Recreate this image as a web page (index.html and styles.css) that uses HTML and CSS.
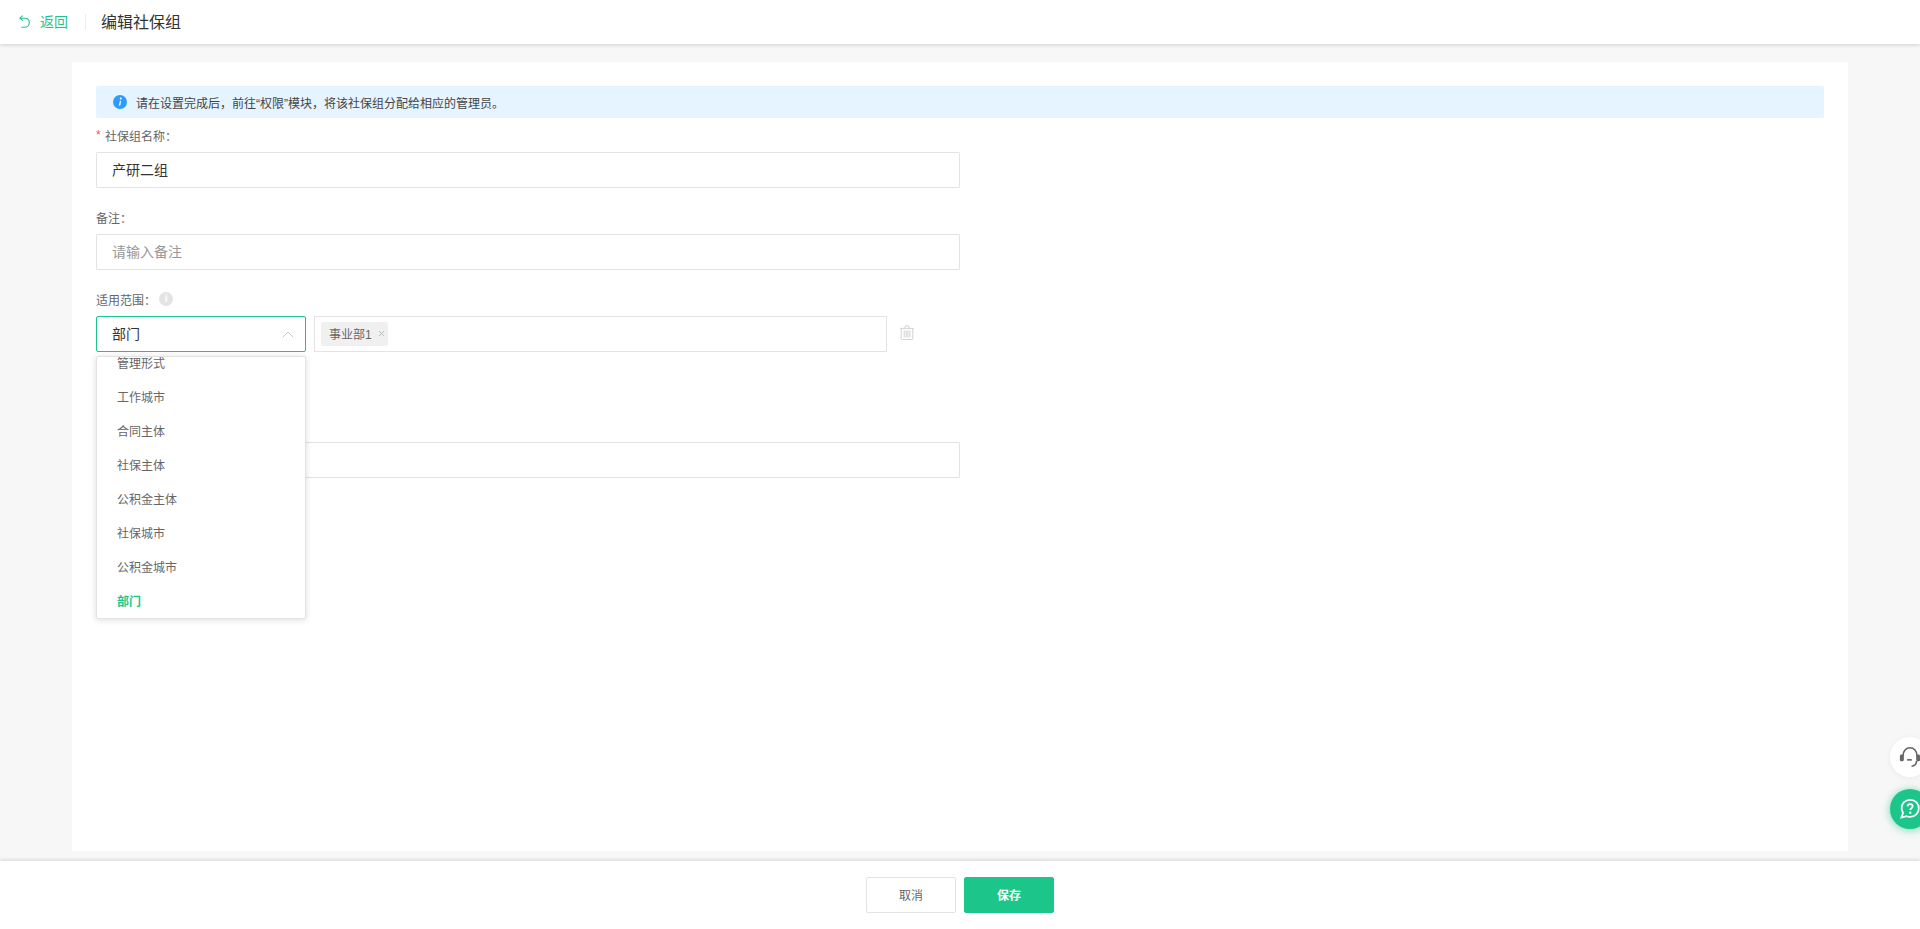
FILE: index.html
```html
<!DOCTYPE html>
<html lang="zh-CN">
<head>
<meta charset="utf-8">
<title>编辑社保组</title>
<link rel="stylesheet" href="styles.css">
</head>
<body>
<div class="app">
  <header class="topbar">
    <a class="back">
      <svg class="back-icon" viewBox="0 0 11 13" fill="none" stroke="currentColor" stroke-width="1.1"><path d="M3.6 0.6 L0.9 3.2 L3.8 5.6"/><path d="M1.2 3.2 H6 C8.6 3.2 10.3 5 10.3 7.4 C10.3 10 8.4 12.2 5.8 12.2 H2.4"/></svg>
      <span>返回</span>
    </a>
    <span class="divider"></span>
    <h1 class="title">编辑社保组</h1>
  </header>
  <main class="content">
    <section class="card">
      <div class="alert">
        <svg class="alert-icon" viewBox="0 0 14 14"><circle cx="7" cy="7" r="7" fill="#2f9bff"/><circle cx="7.8" cy="3.6" r="1" fill="#fff"/><path d="M6.9 5.7 H8.1 L7.3 10.6 H5.9 Z" fill="#fff"/></svg>
        <span>请在设置完成后，前往“权限”模块，将该社保组分配给相应的管理员。</span>
      </div>
      <div class="field">
        <label class="label"><i class="req">*</i>社保组名称：</label>
        <div class="input value">产研二组</div>
      </div>
      <div class="field">
        <label class="label">备注：</label>
        <div class="input placeholder">请输入备注</div>
      </div>
      <div class="field scope">
        <label class="label">适用范围：<span class="info">i</span></label>
        <div class="scope-row">
          <div class="select-wrap">
            <div class="select">
              <span>部门</span>
              <svg class="chevron" viewBox="0 0 12 7" fill="none" stroke="#c4c7cc" stroke-width="1"><path d="M0.7 6.3 L6 1 L11.3 6.3"/></svg>
            </div>
            <ul class="menu">
              <li>管理形式</li>
              <li>工作城市</li>
              <li>合同主体</li>
              <li>社保主体</li>
              <li>公积金主体</li>
              <li>社保城市</li>
              <li>公积金城市</li>
              <li class="active">部门</li>
            </ul>
          </div>
          <div class="tags">
            <span class="tag">事业部1<svg class="tag-x" viewBox="0 0 8 8" fill="none" stroke="#b5b5b5" stroke-width="1"><path d="M1 1 L7 7 M7 1 L1 7"/></svg></span>
          </div>
          <svg class="trash" viewBox="0 0 14 15" fill="none" stroke="#c8c8c8" stroke-width="0.8"><path d="M0.2 3.4 H13.8"/><path d="M4.6 3.2 L5.6 0.9 H8.4 L9.4 3.2"/><path d="M1.2 3.4 V13.6 Q1.2 14.5 2.2 14.5 H11.8 Q12.8 14.5 12.8 13.6 V3.4"/><path d="M4.2 5.4 V12.4 M6.2 5.4 V12.4 M7.9 5.4 V12.4 M9.8 5.4 V12.4"/></svg>
        </div>
      </div>
      <div class="field last">
        <div class="input"></div>
      </div>
    </section>
  </main>
  <footer class="footer">
    <button class="btn cancel">取消</button>
    <button class="btn save">保存</button>
  </footer>
  <div class="float-btn service">
    <svg viewBox="0 0 20 20" fill="none" stroke="#666" stroke-width="1.5"><path d="M3.7 9.4 V8.6 C3.7 4.6 6.4 1.6 10 1.6 C13.6 1.6 16.3 4.6 16.3 8.6 V9.4"/><rect x="0.8" y="7.8" width="3.6" height="6" rx="1.4" fill="#666" stroke="none"/><rect x="15.6" y="7.8" width="3.6" height="6" rx="1.4" fill="#666" stroke="none"/><path d="M16 13.6 C15.8 16.6 13.8 18.2 11.4 18.4"/><path d="M7.4 12.6 H11.6"/></svg>
  </div>
  <div class="float-btn help">
    <svg viewBox="0 0 20 20" fill="none" stroke="#fff" stroke-width="1.6"><path d="M10.2 1.6 C5.6 1.6 2.4 5 2.4 9.4 C2.4 11 2.9 12.4 3.7 13.6 L2.2 17.8 L7 16.6 C8 17 9 17.2 10.2 17.2 C14.6 17.2 18 13.8 18 9.4 C18 5 14.6 1.6 10.2 1.6 Z"/><path d="M7.8 7.6 C7.9 6.3 8.9 5.6 10.1 5.6 C11.4 5.6 12.4 6.4 12.4 7.6 C12.4 9.2 10.2 9.3 10.2 11" stroke-width="1.7"/><circle cx="10.2" cy="13.3" r="1.1" fill="#fff" stroke="none"/></svg>
  </div>
</div>
</body>
</html>
```
FILE: styles.css
```css
* { box-sizing: border-box; }
html, body { margin: 0; padding: 0; height: 100%; }
body {
  font-family: "Liberation Sans", "Noto Sans CJK SC", sans-serif;
  font-size: 12px;
  color: #666;
  background: #f7f7f7;
  overflow: hidden;
}
.app {
  position: relative;
  height: 929px;
  display: flex;
  flex-direction: column;
  overflow: hidden;
}
.topbar {
  height: 44px;
  flex: none;
  display: flex;
  align-items: center;
  padding-left: 19px;
  background: #fff;
  box-shadow: 0 1px 4px rgba(0, 0, 0, 0.16);
  position: relative;
}
.back {
  display: flex;
  align-items: center;
  color: #1cc68a;
  font-size: 14px;
}
.back span { padding-bottom: 2px; }
.back-icon { width: 11px; height: 13px; margin-right: 10px; margin-bottom: 1px; }
.divider {
  width: 1px;
  height: 16px;
  background: #eee;
  margin: 0 15px 0 17px;
}
.title {
  margin: 0;
  padding-bottom: 2px;
  font-size: 16px;
  font-weight: 400;
  color: #333;
}
.content {
  flex: 1;
  min-height: 0;
  padding: 18px 72px 10px;
  display: flex;
}
.card {
  flex: 1;
  background: #fff;
  padding: 24px 24px 0;
}
.alert {
  height: 32px;
  display: flex;
  align-items: center;
  padding-left: 17px;
  background: #e6f4ff;
  border-radius: 2px;
  color: #444;
}
.alert-icon { width: 14px; height: 14px; margin-right: 9px; flex: none; }
.field { width: 864px; }
.label {
  display: flex;
  align-items: center;
  height: 14px;
  margin-top: 10px;
  margin-bottom: 10px;
  color: #666;
}
.req {
  color: #f5535b;
  font-style: normal;
  width: 9px;
}
.input {
  height: 36px;
  border: 1px solid #e3e3e3;
  border-radius: 1px;
  padding: 0 15px 2px;
  display: flex;
  align-items: center;
  font-size: 14px;
  background: #fff;
}
.value { color: #333; }
.placeholder { color: #999; }
.field + .field { margin-top: 22px; }
.field + .field .label { margin-top: 0; }
.info {
  width: 14px;
  height: 14px;
  border-radius: 50%;
  background: #e3e3e3;
  color: #fff;
  font-size: 10px;
  font-weight: 700;
  line-height: 14px;
  text-align: center;
  margin-left: 3px;
}
.scope-row {
  display: flex;
  align-items: flex-start;
}
.select-wrap {
  position: relative;
  width: 210px;
  flex: none;
}
.select {
  height: 36px;
  border: 1px solid #1cc68a;
  border-radius: 2px;
  padding: 0 11px 2px 15px;
  display: flex;
  align-items: center;
  justify-content: space-between;
  font-size: 14px;
  color: #333;
}
.chevron { width: 12px; height: 7px; margin-top: 2px; }
.menu {
  position: absolute;
  top: 40px;
  left: 0;
  width: 210px;
  height: 263px;
  margin: 0;
  padding: 0;
  list-style: none;
  display: flex;
  flex-direction: column;
  justify-content: flex-end;
  overflow: hidden;
  background: #fff;
  border: 1px solid #e3e3e3;
  border-radius: 2px;
  box-shadow: 0 1px 6px rgba(0, 0, 0, 0.14);
  z-index: 5;
}
.menu li {
  flex: none;
  height: 34px;
  padding: 10px 0 0 20px;
  line-height: 17px;
  color: #666;
}
.menu li.active {
  color: #1cc68a;
  font-weight: 700;
}
.tags {
  width: 573px;
  height: 36px;
  margin-left: 8px;
  border: 1px solid #e3e3e3;
  padding: 5px 6px;
  flex: none;
}
.tag {
  display: inline-flex;
  align-items: center;
  width: 67px;
  height: 24px;
  padding: 0 0 1px 8px;
  background: #f0f0f0;
  border-radius: 2px;
  color: #666;
}
.tag-x { width: 7px; height: 7px; margin-left: 6px; }
.trash { width: 14px; height: 15px; margin: 9px 0 0 13px; flex: none; }
.field.last { margin-top: 90px; }
.footer {
  height: 68px;
  flex: none;
  display: flex;
  justify-content: center;
  align-items: center;
  gap: 8px;
  background: #fff;
  box-shadow: 0 -1px 4px rgba(0, 0, 0, 0.14);
  position: relative;
}
.btn {
  width: 90px;
  height: 36px;
  border-radius: 2px;
  font: inherit;
  padding: 0;
  margin-top: -1px;
}
.cancel {
  background: #fff;
  border: 1px solid #e3e3e3;
  color: #666;
}
.save {
  background: #1cc68a;
  border: 1px solid #1cc68a;
  color: #fff;
  font-weight: 700;
}
.float-btn {
  position: absolute;
  right: -10px;
  width: 40px;
  height: 40px;
  border-radius: 50%;
  display: flex;
  align-items: center;
  justify-content: flex-start;
  padding-left: 9px;
}
.float-btn svg { width: 22px; height: 22px; }
.service { top: 737px; background: #fff; box-shadow: 0 1px 6px rgba(0, 0, 0, 0.06); }
.help { top: 789px; background: #1cc68a; box-shadow: 0 1px 8px rgba(28, 198, 138, 0.6); }
```
